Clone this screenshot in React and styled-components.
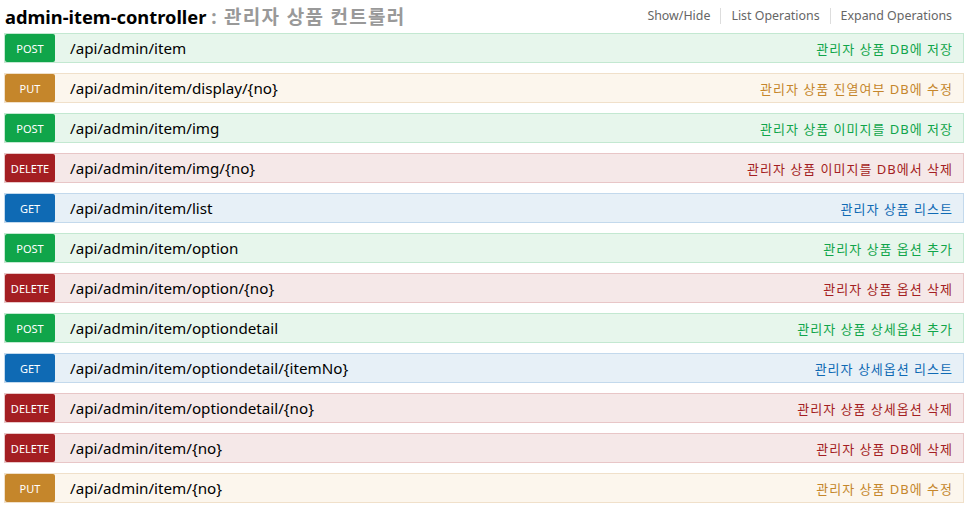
import React from 'react';
import styled, { createGlobalStyle } from 'styled-components';

const GlobalStyle = createGlobalStyle`
  html, body {
    margin: 0;
    padding: 0;
    background: #fff;
  }
  body {
    font-family: "Noto Sans", "Noto Sans CJK KR", sans-serif;
  }
`;

const methods = {
  POST: { badge: '#10a54a', bg: '#e7f6ec', border: '#c3e8d1' },
  PUT: { badge: '#c5862b', bg: '#fcf6ed', border: '#f0e0ca' },
  DELETE: { badge: '#a41e22', bg: '#f5e8e8', border: '#e8c6c7' },
  GET: { badge: '#0f6ab4', bg: '#e7f0f7', border: '#c3d9ec' },
};

const operations = [
  ['POST', '/api/admin/item', '관리자 상품 DB에 저장'],
  ['PUT', '/api/admin/item/display/{no}', '관리자 상품 진열여부 DB에 수정'],
  ['POST', '/api/admin/item/img', '관리자 상품 이미지를 DB에 저장'],
  ['DELETE', '/api/admin/item/img/{no}', '관리자 상품 이미지를 DB에서 삭제'],
  ['GET', '/api/admin/item/list', '관리자 상품 리스트'],
  ['POST', '/api/admin/item/option', '관리자 상품 옵션 추가'],
  ['DELETE', '/api/admin/item/option/{no}', '관리자 상품 옵션 삭제'],
  ['POST', '/api/admin/item/optiondetail', '관리자 상품 상세옵션 추가'],
  ['GET', '/api/admin/item/optiondetail/{itemNo}', '관리자 상세옵션 리스트'],
  ['DELETE', '/api/admin/item/optiondetail/{no}', '관리자 상품 상세옵션 삭제'],
  ['DELETE', '/api/admin/item/{no}', '관리자 상품 DB에 삭제'],
  ['PUT', '/api/admin/item/{no}', '관리자 상품 DB에 수정'],
];

const Resource = styled.div`
  padding: 0 4px 0 4px;
`;

const Heading = styled.div`
  display: flex;
  align-items: center;
  justify-content: space-between;
  height: 33px;
  padding-left: 1px;
  box-sizing: border-box;
  padding-bottom: 2px;
`;

const Title = styled.h2`
  margin: 0;
  font-size: 18.3px;
  font-weight: 700;
  color: #000;
  span {
    color: #999;
    font-size: 19px;
    letter-spacing: 1.3px;
  }
`;

const Links = styled.ul`
  display: flex;
  list-style: none;
  margin: 0;
  padding: 0 12px 0 0;
  font-size: 12.4px;
  color: #666;
`;

const LinkItem = styled.li`
  padding: 0 10px;
  border-left: 1px solid #ddd;
  line-height: 16px;
  &:first-child {
    border-left: none;
  }
  &:last-child {
    padding-right: 0;
  }
`;

const List = styled.div`
  display: flex;
  flex-direction: column;
  gap: 10px;
`;

const Operation = styled.div`
  display: flex;
  align-items: center;
  height: 30px;
  box-sizing: border-box;
  border: 1px solid ${(p) => p.$m.border};
  background: ${(p) => p.$m.bg};
`;

const Badge = styled.span`
  flex: 0 0 50px;
  height: 28px;
  display: flex;
  align-items: center;
  justify-content: center;
  background: ${(p) => p.$m.badge};
  color: #fff;
  font-size: 11px;
  border-radius: 2px;
`;

const Path = styled.span`
  margin-left: 15px;
  font-size: 15.2px;
  color: #000;
  flex: 1;
`;

const Desc = styled.span`
  font-size: 13px;
  letter-spacing: 1px;
  color: ${(p) => p.$m.badge};
  padding-right: 10px;
`;

export default function App() {
  return (
    <>
      <GlobalStyle />
      <Resource>
        <Heading>
          <Title>
            admin-item-controller <span>: 관리자 상품 컨트롤러</span>
          </Title>
          <Links>
            <LinkItem>Show/Hide</LinkItem>
            <LinkItem>List Operations</LinkItem>
            <LinkItem>Expand Operations</LinkItem>
          </Links>
        </Heading>
        <List>
          {operations.map(([method, path, desc], i) => (
            <Operation key={i} $m={methods[method]}>
              <Badge $m={methods[method]}>{method}</Badge>
              <Path>{path}</Path>
              <Desc $m={methods[method]}>{desc}</Desc>
            </Operation>
          ))}
        </List>
      </Resource>
    </>
  );
}
